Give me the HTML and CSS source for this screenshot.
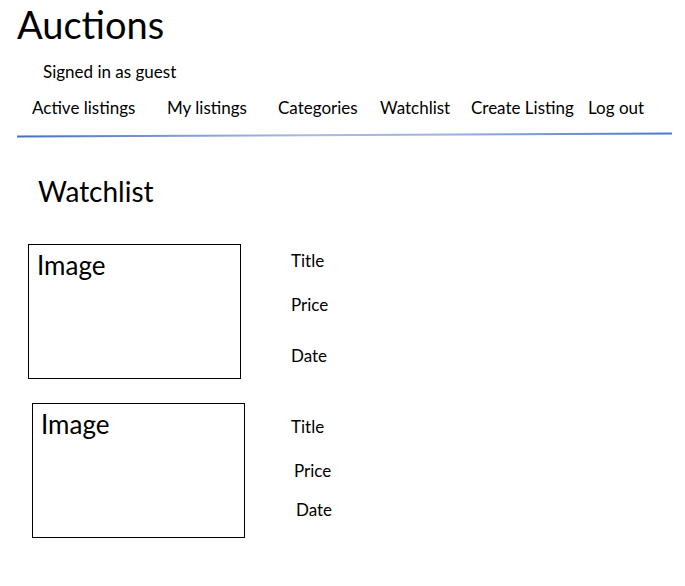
FILE: index.html
```html
<!DOCTYPE html>
<html lang="en">
<head>
<meta charset="utf-8">
<title>Auctions</title>
<link rel="stylesheet" href="styles.css">
</head>
<body>
<header class="site-header">
  <h1 class="brand">Auctions</h1>
  <div class="signed-in">Signed in as guest</div>
  <nav class="nav">
    <a class="nav-link">Active listings</a>
    <a class="nav-link">My listings</a>
    <a class="nav-link">Categories</a>
    <a class="nav-link">Watchlist</a>
    <a class="nav-link">Create Listing</a>
    <a class="nav-link">Log out</a>
  </nav>
  <div class="divider"></div>
</header>
<main class="content">
  <h2 class="page-title">Watchlist</h2>
  <div class="listings">
    <div class="card card-first">
      <div class="image-box">Image</div>
      <div class="meta">
        <div class="meta-title">Title</div>
        <div class="meta-price">Price</div>
        <div class="meta-date">Date</div>
      </div>
    </div>
    <div class="card card-second">
      <div class="image-box">Image</div>
      <div class="meta">
        <div class="meta-title">Title</div>
        <div class="meta-price">Price</div>
        <div class="meta-date">Date</div>
      </div>
    </div>
  </div>
</main>
</body>
</html>
```
FILE: styles.css
```css
* { box-sizing: border-box; }
html, body { margin: 0; padding: 0; background: #ffffff; }
body {
  font-family: Lato, "Open Sans", "Liberation Sans", sans-serif;
  color: #000000;
  width: 685px;
}
.site-header { padding-left: 17px; }
.brand {
  margin: 0;
  padding-top: 6px;
  font-size: 38px;
  font-weight: 400;
  line-height: 37px;
}
.signed-in {
  margin-top: 19px;
  padding-left: 26px;
  font-size: 17px;
  line-height: 20px;
}
.nav {
  margin-top: 16px;
  padding-left: 15px;
  display: grid;
  grid-template-columns: 135px 111px 102px 91px 117px auto;
  font-size: 17px;
  line-height: 20px;
}
.nav-link { color: #000; text-decoration: none; white-space: nowrap; }
.divider {
  margin-top: 16px;
  width: 655px;
  height: 2px;
  background: linear-gradient(90deg, #4470c0 0%, #7f9dd6 25%, #a7bce4 45%, #9bb3e0 65%, #4a78c8 100%);
  transform: rotate(-0.25deg);
}
.content { padding-left: 38px; }
.page-title {
  margin: 39px 0 0 0;
  font-size: 28px;
  font-weight: 400;
  line-height: 32px;
}
.listings {
  margin-top: 37px;
  margin-left: -10px;
  display: flex;
  flex-direction: column;
  gap: 24px;
}
.card { display: flex; align-items: flex-start; }
.card-second { margin-left: 4px; }
.image-box {
  width: 213px;
  height: 135px;
  border: 1px solid #000;
  padding: 6px 0 0 8px;
  font-size: 26px;
  line-height: 28px;
}
.meta {
  display: flex;
  flex-direction: column;
  font-size: 17px;
  line-height: 20px;
}
.card-first .meta { margin-left: 50px; padding-top: 7px; }
.card-first .meta-price { margin-top: 24px; }
.card-first .meta-date { margin-top: 31px; }
.card-second .meta { margin-left: 46px; padding-top: 14px; }
.card-second .meta-price { margin-top: 24px; padding-left: 3px; }
.card-second .meta-date { margin-top: 19px; padding-left: 5px; }
```
